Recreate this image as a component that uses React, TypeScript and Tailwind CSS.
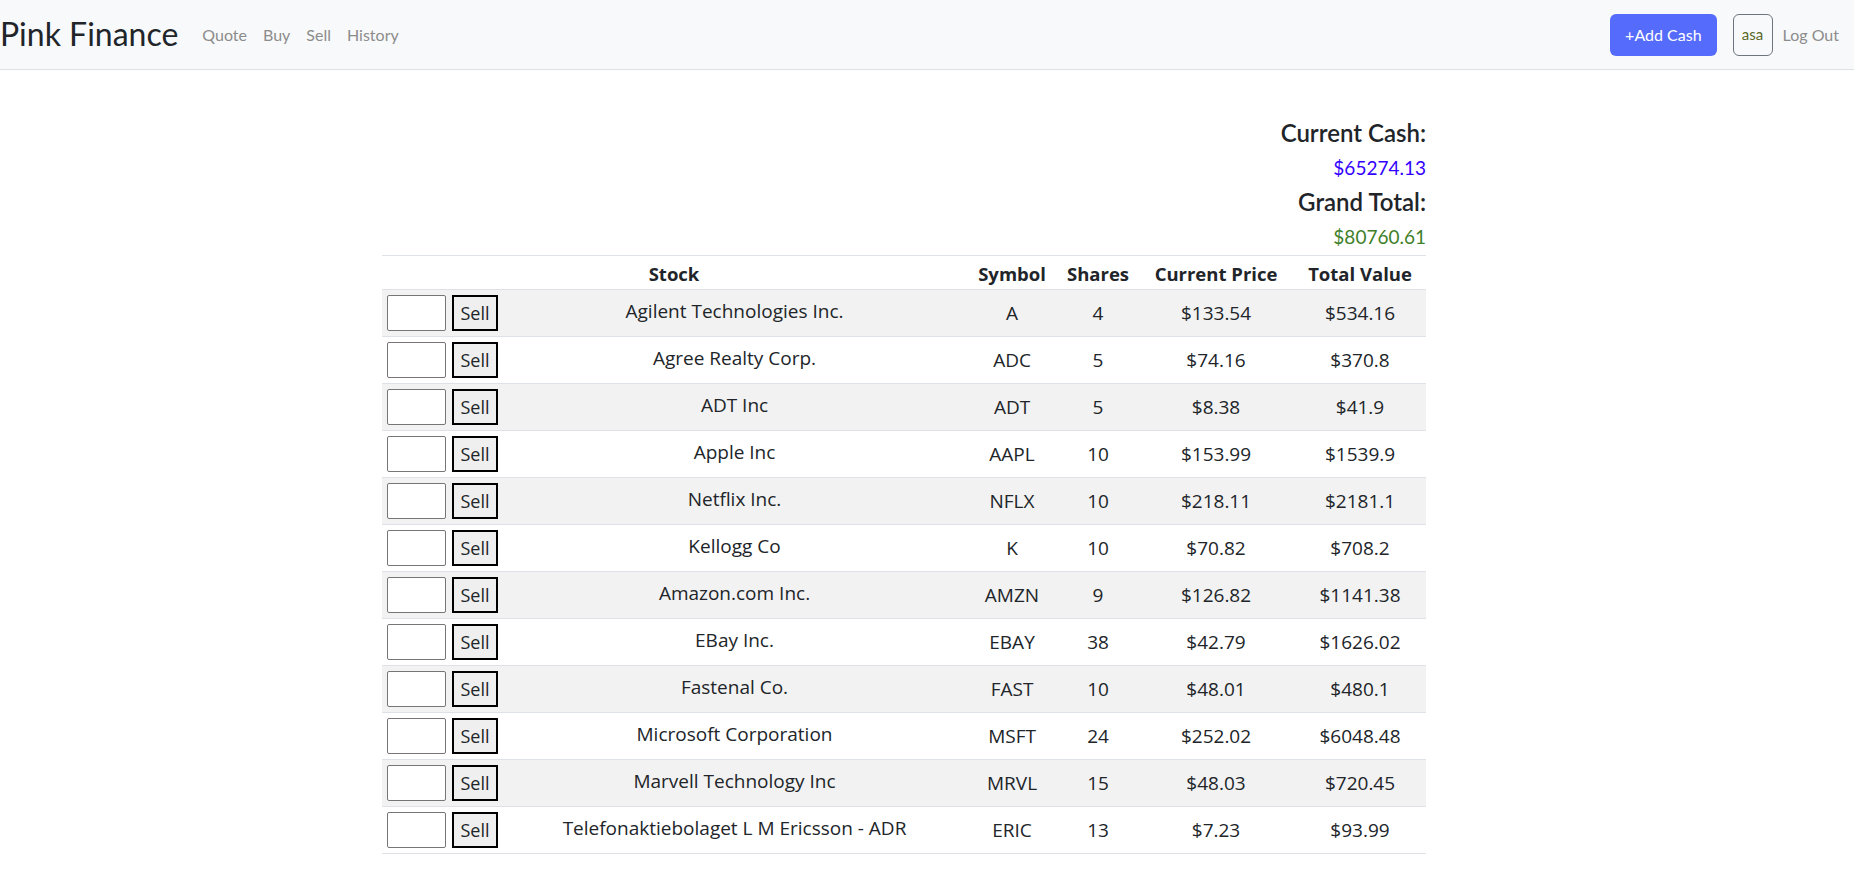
import React from "react";

const stocks = [
  { name: "Agilent Technologies Inc.", symbol: "A", shares: 4, price: "$133.54", total: "$534.16" },
  { name: "Agree Realty Corp.", symbol: "ADC", shares: 5, price: "$74.16", total: "$370.8" },
  { name: "ADT Inc", symbol: "ADT", shares: 5, price: "$8.38", total: "$41.9" },
  { name: "Apple Inc", symbol: "AAPL", shares: 10, price: "$153.99", total: "$1539.9" },
  { name: "Netflix Inc.", symbol: "NFLX", shares: 10, price: "$218.11", total: "$2181.1" },
  { name: "Kellogg Co", symbol: "K", shares: 10, price: "$70.82", total: "$708.2" },
  { name: "Amazon.com Inc.", symbol: "AMZN", shares: 9, price: "$126.82", total: "$1141.38" },
  { name: "EBay Inc.", symbol: "EBAY", shares: 38, price: "$42.79", total: "$1626.02" },
  { name: "Fastenal Co.", symbol: "FAST", shares: 10, price: "$48.01", total: "$480.1" },
  { name: "Microsoft Corporation", symbol: "MSFT", shares: 24, price: "$252.02", total: "$6048.48" },
  { name: "Marvell Technology Inc", symbol: "MRVL", shares: 15, price: "$48.03", total: "$720.45" },
  { name: "Telefonaktiebolaget L M Ericsson - ADR", symbol: "ERIC", shares: 13, price: "$7.23", total: "$93.99" },
];

const Navbar = () => {
  return (
    <nav className="flex items-center h-[70px] bg-[#f8f9fa] border-b border-[#dee2e6] pr-[15px]">
      <a className="text-[32px] leading-[38px] text-[#212529] mr-[16px] -mt-[2px]">Pink Finance</a>
      <div className="flex items-center text-[16px] text-[#8c8c8c] mt-[1px]">
        {["Quote", "Buy", "Sell", "History"].map((link) => (
          <a key={link} className="px-2 py-2 cursor-pointer">
            {link}
          </a>
        ))}
      </div>
      <div className="ml-auto flex items-center">
        <button className="h-[42px] px-[15px] rounded-[6px] bg-[#556bfb] text-white text-[16px]">
          +Add Cash
        </button>
        <div className="ml-[16px] h-[42px] w-[40px] flex items-center justify-center border border-[#6c757d] rounded-[6px] text-[15px] text-[#5b6a2a]">
          asa
        </div>
        <a className="ml-[10px] text-[16px] text-[#8c8c8c]">Log Out</a>
      </div>
    </nav>
  );
};

export default function App() {
  return (
    <div className="min-h-screen bg-white text-[#212529]" style={{ fontFamily: "Lato, 'Open Sans', sans-serif" }}>
      <Navbar />
      <main className="pl-[382px]">
        <div className="w-[1044px]">
          {/* totals */}
          <div className="text-right pt-[48px]">
            <h4 className="text-[24px] leading-[29px] font-semibold">Current Cash:</h4>
            <p className="mt-[8px] text-[19px] leading-[25px] text-[#3300ff]">$65274.13</p>
            <h4 className="mt-[7px] text-[24px] leading-[29px] font-semibold">Grand Total:</h4>
            <p className="mt-[8px] text-[19px] leading-[25px] text-[#3f7f2a]">$80760.61</p>
          </div>

          <table
            className="mt-[6px] w-[1044px] table-fixed border-collapse text-[19px] border-t border-[#dee2e6]"
            style={{ fontFamily: "'Open Sans', Lato, sans-serif" }}
          >
            <colgroup>
              <col className="w-[121px]" />
              <col className="w-[463px]" />
              <col className="w-[92px]" />
              <col className="w-[80px]" />
              <col className="w-[156px]" />
              <col className="w-[132px]" />
            </colgroup>
            <thead>
              <tr className="h-[34px] border-b border-[#dee2e6] text-[18.5px] font-bold">
                <th colSpan={2} className="text-center pt-[3px]">Stock</th>
                <th className="text-center pt-[3px]">Symbol</th>
                <th className="text-center pt-[3px]">Shares</th>
                <th className="text-center pt-[3px]">Current Price</th>
                <th className="text-center pt-[3px]">Total Value</th>
              </tr>
            </thead>
            <tbody>
              {stocks.map((stock, index) => (
                <tr
                  key={stock.symbol}
                  className={`h-[47px] border-b border-[#dee2e6] ${index % 2 === 0 ? "bg-[#f2f2f2]" : "bg-white"}`}
                >
                  <td className="pl-[5px]">
                    <div className="flex items-center">
                      <input className="w-[59px] h-[36px] border border-[#767676] rounded-[2px] bg-white" type="number" />
                      <button className="ml-[6px] w-[46px] h-[36px] border-2 border-black bg-[#efefef] text-[18px] leading-none">
                        Sell
                      </button>
                    </div>
                  </td>
                  <td className="text-center align-middle pb-[4px]">{stock.name}</td>
                  <td className="text-center pt-[1px]">{stock.symbol}</td>
                  <td className="text-center pt-[1px]">{stock.shares}</td>
                  <td className="text-center pt-[1px]">{stock.price}</td>
                  <td className="text-center pt-[1px]">{stock.total}</td>
                </tr>
              ))}
            </tbody>
          </table>
        </div>
      </main>
    </div>
  );
}
